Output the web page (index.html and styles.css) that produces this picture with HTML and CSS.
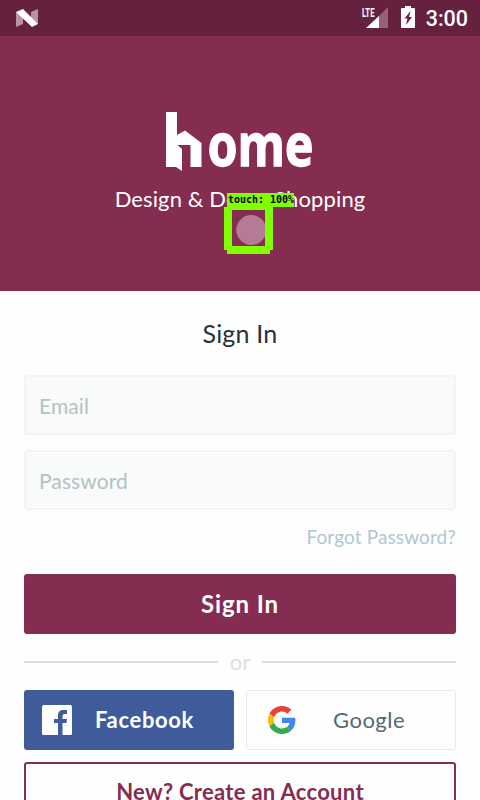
FILE: index.html
```html
<!DOCTYPE html>
<html lang="en">
<head>
<meta charset="utf-8">
<title>Sign In</title>
<link rel="stylesheet" href="styles.css">
</head>
<body>
<div class="status">
  <svg class="nougat" width="22" height="18" viewBox="0 0 22 18"><path fill="#b991a5" d="M0 3l7 2v10l-7 3zM15 3l7-3v15l-7-2z"/><path fill="#fff" d="M0 3l7-3 15 15-6 3z"/></svg>
  <svg class="signal" width="27" height="22" viewBox="0 0 27 22"><path fill="#94637a" d="M27 0v21H6z"/><path fill="#fff" d="M18 9v12H5z"/><text class="lte" x="1" y="10" textLength="12.5" lengthAdjust="spacingAndGlyphs">LTE</text></svg>
  <svg class="battery" width="14" height="22" viewBox="0 0 14 22"><path fill="#fff" d="M4 0h6v2h3q1 0 1 1v18q0 1-1 1H1q-1 0-1-1V3q0-1 1-1h3z"/><path fill="#66213e" d="M9.500 5l-6 7.500h3L5 19l6-8H8z"/></svg>
  <span class="clock">3:00</span>
</div>
<header class="hero">
  <svg class="logo" width="148" height="60" viewBox="0 0 148 60" role="img" aria-label="home"><path fill="#fff" d="M0 0h11v23l8-4.500L35.500 31v24h-11V33H11.500l4.500 4v22l-6-4H0z"/><text class="logotype" x="41.500" y="54.300" textLength="106" lengthAdjust="spacingAndGlyphs">ome</text></svg>
  <p class="tagline">Design &amp; Decor Shopping</p>
  <svg class="touch" width="72" height="62" viewBox="0 0 72 62"><path fill="#80ff00" fill-rule="evenodd" d="M3 0h67v14H49v43h-3v4H3v-4H0V14h3zM8 17v36h33V17z"/><path fill="#b47a96" d="M41 31v12a15 15 0 1 1 0-12z"/><text class="touch-label" x="4" y="9.500" textLength="66">touch: 100%</text></svg>
</header>
<main class="form">
  <h1 class="title">Sign In</h1>
  <div class="field">Email</div>
  <div class="field">Password</div>
  <a class="forgot">Forgot Password?</a>
  <button class="submit"><span>Sign In</span></button>
  <div class="divider"><span>or</span></div>
  <div class="social">
    <button class="facebook"><svg width="30" height="30" viewBox="0 0 30 30"><rect width="30" height="30" rx="1.500" fill="#fff"/><path fill="#3f5b9a" d="M16 30V18h-4v-4h4v-3.500Q16 5 21 5h4v4h-2q-2.500 0-2.500 2v3H25l-.6 4h-3.900v12z"/></svg><span>Facebook</span></button>
    <button class="google"><svg width="28" height="28" viewBox="0 0 48 48"><path fill="#ea4335" d="M24 9.500c3.540 0 6.710 1.220 9.210 3.600l6.850-6.850C35.900 2.380 30.470 0 24 0 14.620 0 6.510 5.380 2.560 13.220l7.980 6.190C12.430 13.720 17.740 9.500 24 9.500z"/><path fill="#4285f4" d="M46.980 24.550c0-1.570-.15-3.090-.38-4.550H24v9.020h12.940c-.58 2.960-2.260 5.480-4.780 7.180l7.730 6c4.510-4.180 7.090-10.360 7.090-17.650z"/><path fill="#fbbc05" d="M10.530 28.590a14.500 14.500 0 0 1 0-9.180l-7.980-6.190a24 24 0 0 0 0 21.560z"/><path fill="#34a853" d="M24 48c6.480 0 11.930-2.130 15.890-5.810l-7.730-6c-2.150 1.450-4.920 2.300-8.160 2.300-6.260 0-11.570-4.220-13.470-9.910l-7.980 6.190C6.510 42.620 14.620 48 24 48z"/></svg><span>Google</span></button>
  </div>
  <button class="create"><span>New? Create an Account</span></button>
</main>
</body>
</html>
```
FILE: styles.css
```css
* { box-sizing: border-box; }
body { margin: 0; height: 800px; overflow: hidden; background: #fefefe; font-family: Lato, sans-serif; }
h1, p { margin: 0; font-weight: 400; }
button { font: inherit; padding: 0; border: 0; border-radius: 3px; height: 60px; display: flex; align-items: center; justify-content: center; }
button span { padding-bottom: 2px; }
.status { height: 36px; background: #66213e; display: flex; align-items: flex-start; padding: 0 12px 0 16px; color: #fff; }
.nougat { margin-top: 9px; }
.signal { margin: 7px 13px 0 auto; overflow: visible; }
.lte { font: 700 12px Roboto, sans-serif; fill: #fff; }
.battery { margin-top: 6px; }
.clock { margin-left: 11px; font: 500 21.500px/38px Roboto, sans-serif; }
.hero { position: relative; height: 255px; background: #842d50; display: flex; flex-direction: column; align-items: center; padding-top: 76px; color: #fff; }
.logo { overflow: visible; }
.logotype { font: 700 60px "Noto Sans", sans-serif; fill: #fff; stroke: #fff; stroke-width: 1.300px; }
.tagline { font-size: 22px; line-height: 28px; margin-top: 13px; letter-spacing: .12px; white-space: nowrap; }
.touch { position: absolute; left: 224px; top: 157px; }
.touch-label { font: 700 10px "DejaVu Sans Mono", monospace; fill: #000; }
.form { padding: 27px 24px 0; display: flex; flex-direction: column; }
.title { font-size: 25px; line-height: 30px; text-align: center; color: #263238; margin-bottom: 27px; letter-spacing: .2px; }
.field { height: 60px; border: 2px solid #f1f4f4; border-radius: 4px; background: #f9fafa; color: #b3c2c4; font-size: 21px; line-height: 58px; padding-left: 13px; margin-bottom: 15px; letter-spacing: .1px; }
.forgot { align-self: flex-end; height: 24px; line-height: 24px; font-size: 19px; color: #b0c7d0; letter-spacing: .12px; }
.submit { margin-top: 25px; background: #842d50; color: #fff; font-size: 24px; font-weight: 700; letter-spacing: .9px; }
.divider { height: 56px; display: flex; align-items: center; gap: 12px; color: #d8e1e6; font-size: 22px; }
.divider span { padding-bottom: 2px; }
.divider::before, .divider::after { content: ""; flex: 1; height: 2px; background: #d6dfe3; }
.social { display: grid; grid-template-columns: 210px 210px; gap: 12px; }
.facebook { justify-content: flex-start; padding-left: 18px; background: #3f5b9a; color: #fff; font-size: 22px; font-weight: 700; letter-spacing: .65px; }
.facebook span { margin-left: 23px; }
.google { justify-content: flex-start; padding-left: 21px; background: #fefefe; border: 1px solid #e4ecf0; color: #546970; font-size: 22px; letter-spacing: .5px; }
.google span { margin-left: 37px; }
.create { margin-top: 12px; border: 2px solid #842d50; background: #fefefe; color: #842d50; font-size: 22px; font-weight: 700; letter-spacing: .3px; }
```
